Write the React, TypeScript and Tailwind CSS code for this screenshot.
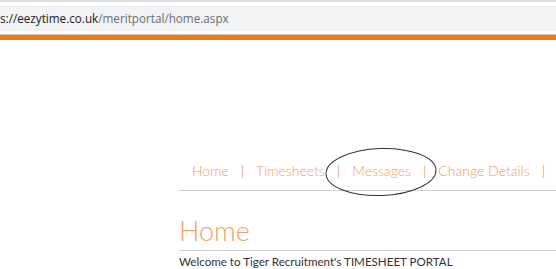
import React from 'react'

const navItems = ['Home', 'Timesheets', 'Messages', 'Change Details']

export default function App() {
  return (
    <div className="relative h-[269px] w-[556px] overflow-hidden bg-white font-['Lato',sans-serif]">
      {/* Browser address bar */}
      <div className="h-[2px] bg-[#dee1e6]" />
      <div className="pt-[4px] pb-[3px]">
        <div className="flex h-[25px] items-center whitespace-nowrap bg-[#f1f3f4] font-['Open_Sans',sans-serif] text-[11.7px]">
          <span className="text-[#202124]">s://eezytime.co.uk</span>
          <span className="text-[#6b6e72]">/meritportal/home.aspx</span>
        </div>
      </div>
      <div className="h-[1px] bg-[#c8c8c8]" />
      <div className="h-[5px] bg-[#f07c12]" />

      {/* Page */}
      <div className="ml-[179px] w-[400px]">
        <nav className="mt-[122px] flex items-center whitespace-nowrap pb-[10px] pl-[13px] text-[14px] font-light leading-[18px]">
          {navItems.map((item) => (
            <React.Fragment key={item}>
              <span className="shrink-0 text-[#f59a5e]">{item}</span>
              <span className="mx-[12px] shrink-0 text-[#f0821f]">|</span>
            </React.Fragment>
          ))}
        </nav>
        <div className="h-[1px] bg-[#cfcfcf]" />
        <h1 className="mt-[22px] text-[27px] font-light leading-[36px] text-[#f7a064]">Home</h1>
        <div className="mt-[1px] h-[1px] bg-[#cfcfcf]" />
        <p className="mt-[3px] whitespace-nowrap text-[11.6px] font-normal leading-[15px] text-[#333]">
          Welcome to Tiger Recruitment's TIMESHEET PORTAL
        </p>
      </div>

      {/* Hand-drawn annotation circle */}
      <svg className="absolute left-[324px] top-[146px]" width="116" height="52" viewBox="0 0 116 52">
        <ellipse cx="57" cy="26" rx="55" ry="23.5" fill="none" stroke="#333" strokeWidth="1" transform="rotate(-2 57 26)" />
      </svg>
    </div>
  )
}
